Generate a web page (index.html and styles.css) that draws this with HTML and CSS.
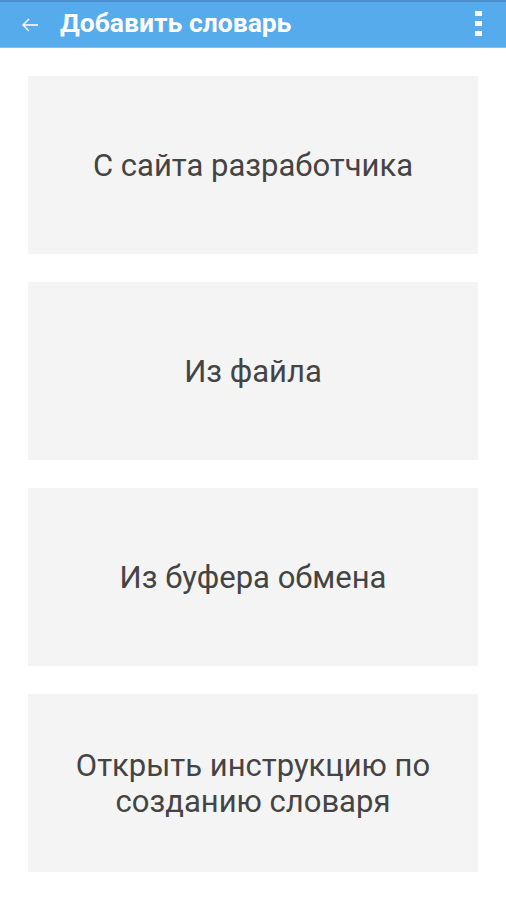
FILE: index.html
```html
<!DOCTYPE html>
<html lang="ru">
<head>
<meta charset="utf-8">
<link rel="stylesheet" href="styles.css">
</head>
<body>
<div class="statusline"></div>
<header class="appbar">
  <svg class="back" width="18" height="16" viewBox="0 0 18 16"><path d="M17 8H2M8 2L2 8l6 6" fill="none" stroke="#fff" stroke-width="1.4"/></svg>
  <h1 class="title">Добавить словарь</h1>
  <div class="menu"><span></span><span></span><span></span></div>
</header>
<main class="list">
  <button class="card">С сайта разработчика</button>
  <button class="card">Из файла</button>
  <button class="card">Из буфера обмена</button>
  <button class="card">Открыть инструкцию по<br>созданию словаря</button>
</main>
</body>
</html>
```
FILE: styles.css
```css
html, body { margin: 0; padding: 0; background: #fff; }
body { width: 506px; height: 900px; overflow: hidden; font-family: Roboto, "Noto Sans", sans-serif; }
.statusline { height: 2px; background: #4a8fc9; }
.appbar { height: 45px; background: #56abed; display: flex; align-items: center; border-bottom: 1px solid #7fc0f2; }
.back { margin-left: 21px; margin-right: 21px; }
.title { margin: 0; flex: 1; color: #fff; font-size: 26.5px; font-weight: 700; letter-spacing: 0; line-height: 1; padding-bottom: 2px; }
.menu { display: flex; flex-direction: column; gap: 5px; margin-right: 24px; padding-bottom: 2px; }
.menu span { display: block; width: 7px; height: 5px; background: #fff; }
.list { display: flex; flex-direction: column; gap: 28px; padding: 28px 28px 0; }
.card { height: 178px; border: 0; background: #f4f4f4; color: #444; font-family: Roboto, "Noto Sans", sans-serif; font-size: 31px; line-height: 36px; text-align: center; padding: 2px 0 0; }
```
